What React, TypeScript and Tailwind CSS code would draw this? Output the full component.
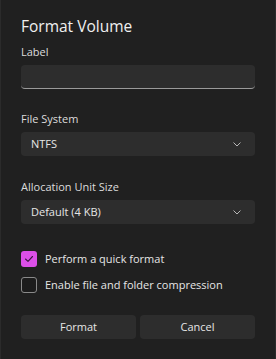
import { useState } from 'react'

function Chevron() {
  return (
    <svg width="8" height="5" viewBox="0 0 8 5" fill="none" className="text-[#b8b8b8]">
      <path d="M0.8 0.8 L4 4 L7.2 0.8" stroke="currentColor" strokeWidth="1" strokeLinecap="round" strokeLinejoin="round" />
    </svg>
  )
}

function Select({ value }: { value: string }) {
  return (
    <div className="mt-[5px] h-[24px] w-[234px] rounded-[4px] bg-[#2d2d2d] flex items-center justify-between pl-[10px] pr-[14px] text-[11px] leading-[16px] text-[#e6e6e6]">
      <span>{value}</span>
      <Chevron />
    </div>
  )
}

function Check({ checked, label }: { checked: boolean; label: string }) {
  return (
    <div className="flex items-center gap-[8px] h-[16px]">
      {checked ? (
        <div className="w-[16px] h-[16px] rounded-[3px] bg-[#dc4fe8] flex items-center justify-center">
          <svg width="10" height="8" viewBox="0 0 10 8" fill="none">
            <path d="M1.5 4 L4 6.3 L8.5 1.5" stroke="#3a1640" strokeWidth="1.1" strokeLinecap="round" strokeLinejoin="round" />
          </svg>
        </div>
      ) : (
        <div className="w-[16px] h-[16px] rounded-[3px] border border-[#8a8a8a] bg-[#1c1c1c]" />
      )}
      <span className="text-[11px] leading-[16px] text-[#e6e6e6]">{label}</span>
    </div>
  )
}

export default function App() {
  const [label] = useState('')
  return (
    <div
      className="w-[276px] h-[359px] bg-[#202020] border-l border-r border-[#2b2b2b] pl-[20px] pt-[15px]"
      style={{ fontFamily: '"Segoe UI", "Open Sans", sans-serif' }}
    >
      <h1 className="text-[15.5px] leading-[22px] text-[#f0f0f0]">Format Volume</h1>

      <p className="mt-[7px] text-[11px] leading-[16px] text-[#dcdcdc]">Label</p>
      <div className="mt-[5px] h-[24px] w-[234px] rounded-[4px] bg-[#2d2d2d] border-b border-[#9a9a9a] text-[11px] text-white px-[10px] flex items-center">
        {label}
      </div>

      <p className="mt-[22px] text-[11px] leading-[16px] text-[#dcdcdc]">File System</p>
      <Select value="NTFS" />

      <p className="mt-[23px] text-[11px] leading-[16px] text-[#dcdcdc]">Allocation Unit Size</p>
      <Select value="Default (4 KB)" />

      <div className="mt-[27px] flex flex-col gap-[10px]">
        <Check checked label="Perform a quick format" />
        <Check checked={false} label="Enable file and folder compression" />
      </div>

      <div className="mt-[22px] flex gap-[4px] w-[234px]">
        <button className="flex-1 h-[24px] rounded-[4px] bg-[#2d2d2d] text-[11px] text-[#e6e6e6]">Format</button>
        <button className="flex-1 h-[24px] rounded-[4px] bg-[#2d2d2d] text-[11px] text-[#e6e6e6]">Cancel</button>
      </div>
    </div>
  )
}
